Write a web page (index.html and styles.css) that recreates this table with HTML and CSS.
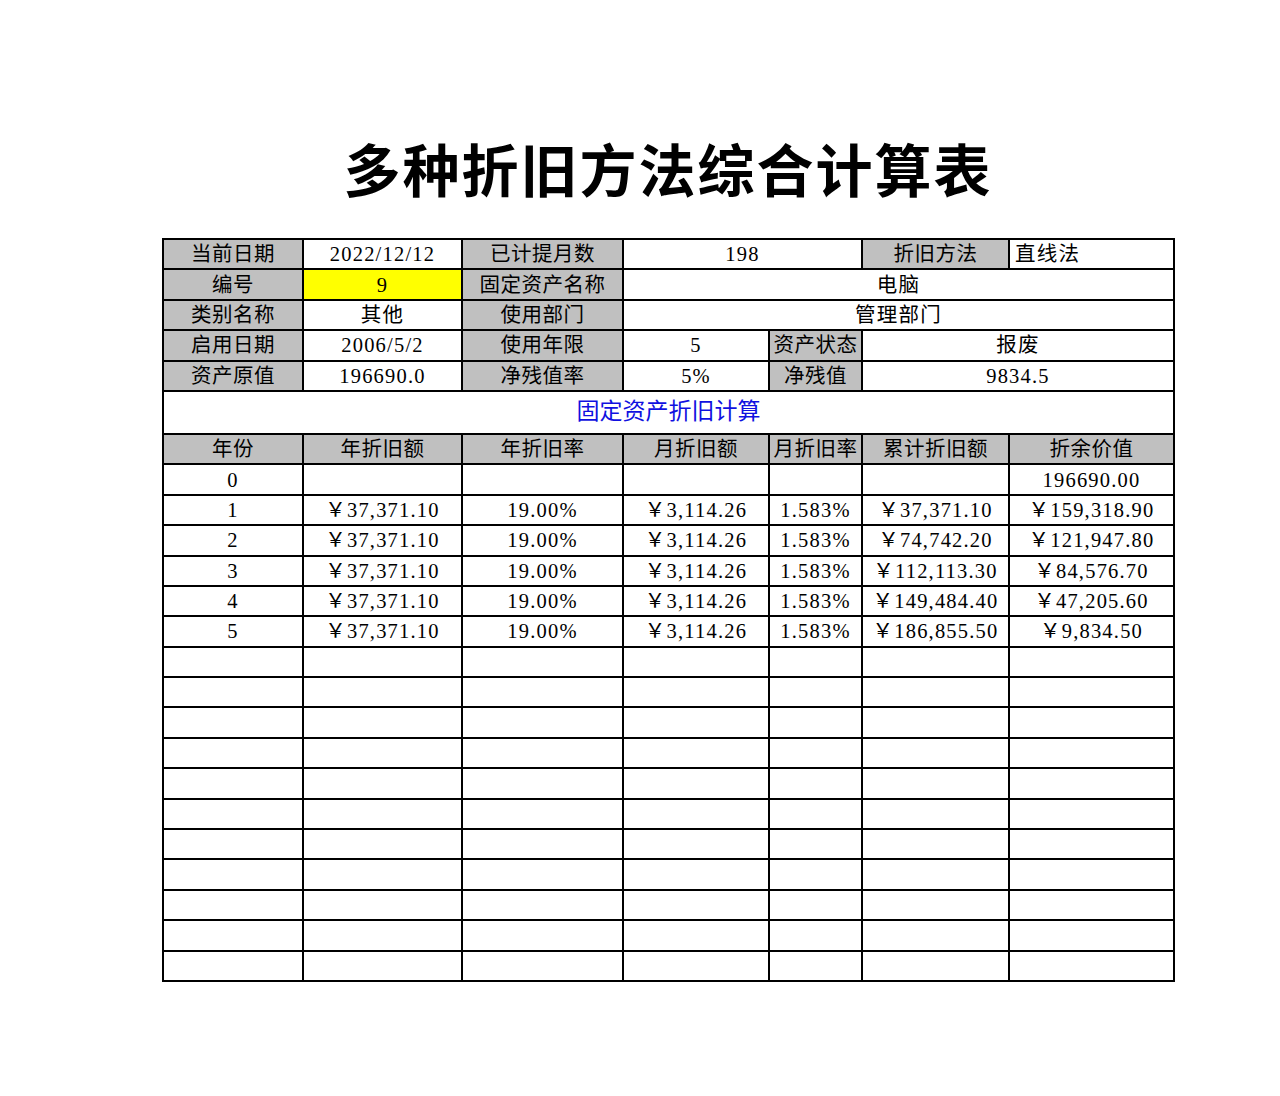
FILE: index.html
```html
<!DOCTYPE html>
<html lang="zh-CN">
<head>
<meta charset="utf-8">
<title>多种折旧方法综合计算表</title>
<link rel="stylesheet" href="styles.css">
</head>
<body>
<div class="page">
  <h1 class="title">多种折旧方法综合计算表</h1>
  <table class="sheet">
    <colgroup>
      <col class="c1"><col class="c2"><col class="c3"><col class="c4"><col class="c5"><col class="c6"><col class="c7">
    </colgroup>
    <tbody>
      <tr>
        <td class="lbl">当前日期</td>
        <td>2022/12/12</td>
        <td class="lbl">已计提月数</td>
        <td colspan="2">198</td>
        <td class="lbl">折旧方法</td>
        <td class="left">直线法</td>
      </tr>
      <tr>
        <td class="lbl">编号</td>
        <td class="yellow">9</td>
        <td class="lbl">固定资产名称</td>
        <td colspan="4">电脑</td>
      </tr>
      <tr>
        <td class="lbl">类别名称</td>
        <td>其他</td>
        <td class="lbl">使用部门</td>
        <td colspan="4">管理部门</td>
      </tr>
      <tr>
        <td class="lbl">启用日期</td>
        <td>2006/5/2</td>
        <td class="lbl">使用年限</td>
        <td>5</td>
        <td class="lbl">资产状态</td>
        <td colspan="2">报废</td>
      </tr>
      <tr>
        <td class="lbl">资产原值</td>
        <td>196690.0</td>
        <td class="lbl">净残值率</td>
        <td>5%</td>
        <td class="lbl">净残值</td>
        <td colspan="2">9834.5</td>
      </tr>
      <tr class="banner">
        <td colspan="7">固定资产折旧计算</td>
      </tr>
      <tr>
        <td class="lbl">年份</td>
        <td class="lbl">年折旧额</td>
        <td class="lbl">年折旧率</td>
        <td class="lbl">月折旧额</td>
        <td class="lbl">月折旧率</td>
        <td class="lbl">累计折旧额</td>
        <td class="lbl">折余价值</td>
      </tr>
      <tr><td>0</td><td></td><td></td><td></td><td></td><td></td><td>196690.00</td></tr>
      <tr><td>1</td><td>￥37,371.10</td><td>19.00%</td><td>￥3,114.26</td><td>1.583%</td><td>￥37,371.10</td><td>￥159,318.90</td></tr>
      <tr><td>2</td><td>￥37,371.10</td><td>19.00%</td><td>￥3,114.26</td><td>1.583%</td><td>￥74,742.20</td><td>￥121,947.80</td></tr>
      <tr><td>3</td><td>￥37,371.10</td><td>19.00%</td><td>￥3,114.26</td><td>1.583%</td><td>￥112,113.30</td><td>￥84,576.70</td></tr>
      <tr><td>4</td><td>￥37,371.10</td><td>19.00%</td><td>￥3,114.26</td><td>1.583%</td><td>￥149,484.40</td><td>￥47,205.60</td></tr>
      <tr><td>5</td><td>￥37,371.10</td><td>19.00%</td><td>￥3,114.26</td><td>1.583%</td><td>￥186,855.50</td><td>￥9,834.50</td></tr>
      <tr><td></td><td></td><td></td><td></td><td></td><td></td><td></td></tr>
      <tr><td></td><td></td><td></td><td></td><td></td><td></td><td></td></tr>
      <tr><td></td><td></td><td></td><td></td><td></td><td></td><td></td></tr>
      <tr><td></td><td></td><td></td><td></td><td></td><td></td><td></td></tr>
      <tr><td></td><td></td><td></td><td></td><td></td><td></td><td></td></tr>
      <tr><td></td><td></td><td></td><td></td><td></td><td></td><td></td></tr>
      <tr><td></td><td></td><td></td><td></td><td></td><td></td><td></td></tr>
      <tr><td></td><td></td><td></td><td></td><td></td><td></td><td></td></tr>
      <tr><td></td><td></td><td></td><td></td><td></td><td></td><td></td></tr>
      <tr><td></td><td></td><td></td><td></td><td></td><td></td><td></td></tr>
      <tr><td></td><td></td><td></td><td></td><td></td><td></td><td></td></tr>
    </tbody>
  </table>
</div>
</body>
</html>
```

FILE: styles.css
```css
html, body {
  margin: 0;
  padding: 0;
  background: #ffffff;
}

body {
  font-family: "Liberation Serif", "Noto Sans CJK SC", serif;
  color: #000000;
}

.page {
  width: 1012px;
  margin-left: 162px;
  padding-top: 128px;
}

.title {
  margin: 0;
  height: 110px;
  font-family: "Noto Sans CJK SC", sans-serif;
  font-weight: 700;
  font-size: 57px;
  line-height: 78px;
  text-align: center;
  letter-spacing: 2px;
  color: #000000;
}

.sheet {
  width: 1012px;
  border-collapse: collapse;
  table-layout: fixed;
}

.c1 { width: 140px; }
.c2 { width: 159px; }
.c3 { width: 161px; }
.c4 { width: 146px; }
.c5 { width: 93px; }
.c6 { width: 147px; }
.c7 { width: 165px; }

.sheet td {
  border: 2px solid #000000;
  height: 28.4px;
  padding: 0;
  text-align: center;
  vertical-align: middle;
  font-size: 20.5px;
  line-height: 26px;
  letter-spacing: 1.2px;
  white-space: nowrap;
  overflow: hidden;
}

.sheet td.lbl {
  background: #c0c0c0;
  letter-spacing: 0.5px;
}

.sheet td.yellow {
  background: #ffff00;
}

.sheet td.left {
  text-align: left;
  padding-left: 5px;
}

.sheet tr.banner td {
  height: 41px;
  color: #1010e0;
  font-size: 23px;
  letter-spacing: 0;
}
```
